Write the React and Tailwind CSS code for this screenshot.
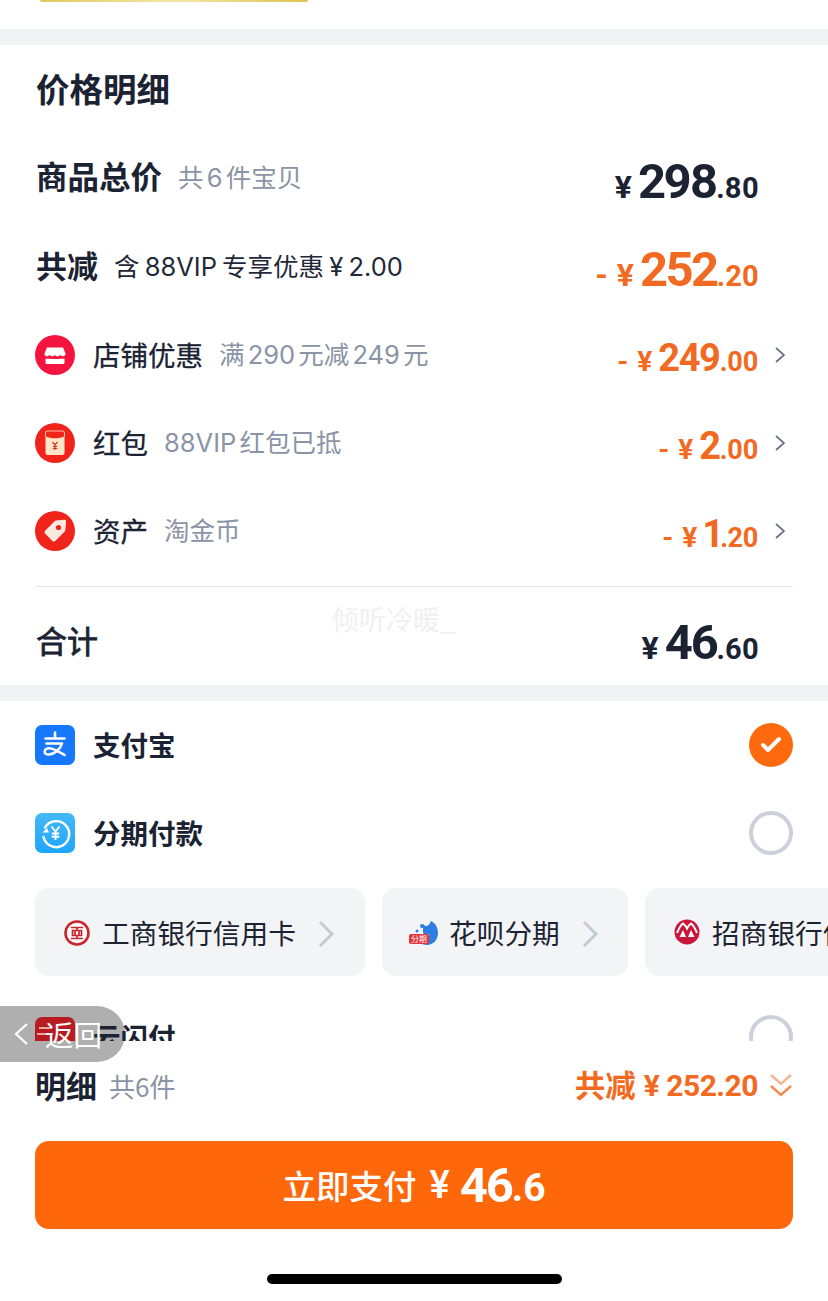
import React from 'react';
import { Check } from 'lucide-react';

const numFont = "font-['Roboto','Noto_Sans_CJK_SC',sans-serif]";
const noteClass = "font-['Inter','Noto_Sans_CJK_SC',sans-serif] text-[25.500px]";

const Price = ({ minus, whole, cents, bigClass, smallClass, yenClass }) => (
  <span className={`flex items-baseline ${numFont} font-bold leading-none proportional-nums`}>
    {minus && <span className={`${yenClass} mr-[9px]`}>-</span>}
    <span className={`${yenClass} mr-[6px]`}>¥</span>
    <span className={bigClass}>{whole}</span>
    <span className={smallClass}>{cents}</span>
  </span>
);

const StoreIcon = () => (
  <svg viewBox="0 0 40 40" className="w-[40px] h-[40px] shrink-0">
    <circle cx="20" cy="20" r="20" fill="#f5143f" />
    <path d="M12 12.500h16l2.500 6c.3 1.600-1 2.800-2.600 2.800-1.200 0-2.200-.6-2.700-1.500-.6 1-1.600 1.500-2.700 1.500s-2-.5-2.500-1.500c-.5 1-1.400 1.500-2.500 1.500s-2.100-.5-2.700-1.500c-.5.900-1.500 1.500-2.700 1.500-1.600 0-2.900-1.200-2.600-2.800z" fill="#fff" />
    <path d="M10.500 23.500c3 .6 16 .6 19 0v4.200c0 .8-.6 1.300-1.300 1.300H11.800c-.7 0-1.300-.5-1.300-1.300z" fill="#fff" />
  </svg>
);

const EnvelopeIcon = () => (
  <svg viewBox="0 0 40 40" className="w-[40px] h-[40px] shrink-0">
    <circle cx="20" cy="20" r="20" fill="#f0241b" />
    <rect x="10.500" y="8" width="19" height="24" rx="2" fill="#fde6c8" />
    <path d="M10.500 10a2 2 0 0 1 2-2h15a2 2 0 0 1 2 2v3.500c-5 3-14 3-19 0z" fill="#f0241b" stroke="#fde6c8" strokeWidth="0.8" />
    <path d="M17.500 19l2.500 3 2.500-3M20 22v5M17.800 23.500h4.400M17.800 25.500h4.400" stroke="#d8301f" strokeWidth="1.200" fill="none" />
  </svg>
);

const TagIcon = () => (
  <svg viewBox="0 0 40 40" className="w-[40px] h-[40px] shrink-0">
    <circle cx="20" cy="20" r="20" fill="#f0241b" />
    <path d="M21 9.500l8.200-.7c1.100-.1 2 .8 1.900 1.900l-.7 8.200c-.1.600-.3 1.100-.7 1.500l-9.500 9.500c-.8.800-2 .8-2.800 0l-7.300-7.300c-.8-.8-.8-2 0-2.800l9.500-9.500c.4-.4.900-.7 1.400-.8z" fill="#fde9e0" />
    <circle cx="23.500" cy="16.500" r="2.600" fill="#f0241b" />
  </svg>
);

const AlipayIcon = () => (
  <svg viewBox="0 0 40 40" className="w-[40px] h-[40px] shrink-0">
    <rect width="40" height="40" rx="7" fill="#1677ff" />
    <path d="M10.500 13.500h19M20 7.500v6M11.500 18.500h15.500c-1.500 5.500-7.500 10.800-13 11-3 .1-4.500-1.300-4.300-3.200.2-2 2.300-3.500 5.300-3 4.500.6 10 4 14.500 6.700" stroke="#fff" strokeWidth="2.600" fill="none" strokeLinecap="round" strokeLinejoin="round" />
  </svg>
);

const InstallmentIcon = () => (
  <svg viewBox="0 0 40 40" className="w-[40px] h-[40px] shrink-0">
    <defs>
      <linearGradient id="inst" x1="0" y1="0" x2="0" y2="1">
        <stop offset="0" stopColor="#45b9f5" />
        <stop offset="1" stopColor="#1ea5fb" />
      </linearGradient>
    </defs>
    <rect width="40" height="40" rx="7" fill="url(#inst)" />
    <path d="M10 14.500A13 13 0 1 1 8.500 24" stroke="#fff" strokeWidth="2.400" fill="none" strokeLinecap="round" />
    <path d="M7.500 19.500h6.500l-2-4.500z" fill="#fff" />
    <path d="M16.500 13.500l4 5 4-5M20.500 18.500v8.500M16.800 20.500h7.400M16.800 23.800h7.400" stroke="#fff" strokeWidth="1.900" fill="none" />
  </svg>
);

const IcbcIcon = () => (
  <svg viewBox="0 0 26 26" className="w-[26px] h-[26px] shrink-0 translate-y-[1px]">
    <circle cx="13" cy="13" r="11.500" stroke="#c8252c" strokeWidth="2.600" fill="#fff" />
    <path d="M7 7.500h12M7 18.500h12M13 7.500v3M13 15.500v3M8.500 10.500h9v5h-9zM11 10.500v5M15 10.500v5" stroke="#c8252c" strokeWidth="1.700" fill="none" />
  </svg>
);

const HuabeiIcon = () => (
  <span className="relative w-[30px] h-[26px] shrink-0 -mr-[2px] translate-y-[1px]">
    <svg viewBox="0 0 30 26" className="w-[30px] h-[26px]">
      <path d="M14 4c2 3 6 3 8-3 4 2 7 6 7 12 0 7-5 12-11 12-3 0-6-1-8-3 6 0 11-3 10-8-2 2-6 1-6-2z" fill="#2d7fe3" />
      <circle cx="13" cy="6" r="2" fill="#2d7fe3" />
      <circle cx="8" cy="11" r="1.500" fill="#2d7fe3" />
    </svg>
    <span className="absolute left-0 bottom-[2px] w-[20px] h-[10px] bg-[#e2353c] rounded-[2px] text-white text-[8px] leading-[10px] text-center">分期</span>
  </span>
);

const CmbIcon = () => (
  <svg viewBox="0 0 26 26" className="w-[26px] h-[26px] shrink-0">
    <circle cx="13" cy="13" r="12.500" fill="#c8173a" />
    <path d="M3 14C5 9 7 6 9 4.500c1.500 1 3 3 4 5 1-2 2.500-4 4-5 2 1.500 4 4.500 6 9.500" stroke="#fff" strokeWidth="2" fill="none" />
    <path d="M5.500 18l3.500-7 3 7zM14 18l3-7 3.500 7z" fill="#fff" />
  </svg>
);

const UnionIcon = () => (
  <svg viewBox="0 0 40 40" className="w-[40px] h-[40px] shrink-0">
    <rect width="40" height="40" rx="7" fill="#b81c22" />
    <path d="M4 11h13M2 17h16" stroke="#f3d9c8" strokeWidth="1.600" />
  </svg>
);

const DetailRow = ({ icon, title, note, price }) => (
  <div className="h-[88px] flex items-center">
    {icon}
    <span className="ml-[18px] text-[27.500px] text-[#1b2333] [-webkit-text-stroke:0.3px_#1b2333]">{title}</span>
    <span className={`ml-[16px] ${noteClass} [word-spacing:-4px] text-[#8a94a6]`}>{note}</span>
    <span className="ml-auto translate-y-[3px]">{price}</span>
    <span className="w-[35px] pl-[17px]">
      <svg viewBox="0 0 10 16" className="w-[10px] h-[16px]" fill="none" stroke="#6b7280" strokeWidth="1.800">
        <path d="M1 1l8 7-8 7" />
      </svg>
    </span>
  </div>
);

const smallPrice = (whole, cents) => (
  <Price
    minus
    whole={whole}
    cents={cents}
    yenClass="text-[28px] text-[#f26a21]"
    bigClass="text-[38px] tracking-[-1.500px] text-[#f26a21]"
    smallClass="text-[27px] tracking-[-0.5px] text-[#f26a21]"
  />
);

const PayRow = ({ icon, title, checked }) => (
  <div className="h-[88px] flex items-center shrink-0">
    {icon}
    <span className="ml-[18px] text-[27.500px] font-bold text-[#1b2333]">{title}</span>
    {checked ? (
      <span className="ml-auto w-[44px] h-[44px] rounded-full bg-[#ff6a0e] flex items-center justify-center">
        <Check size={24} strokeWidth={4} className="text-white" />
      </span>
    ) : (
      <span className="ml-auto w-[44px] h-[44px] rounded-full border-[4px] border-[#cbd0da]" />
    )}
  </div>
);

const Chip = ({ icon, label, arrow, className }) => (
  <div className={`h-[88px] shrink-0 rounded-[14px] bg-[#f3f4f6] flex items-center ${className}`}>
    {icon}
    <span className="ml-[12px] text-[27.700px] text-[#1b2333] whitespace-nowrap translate-y-[1px]">{label}</span>
    {arrow && (
      <svg viewBox="0 0 16 28" className="ml-[22px] w-[16px] h-[28px] shrink-0 translate-y-[2px]" fill="none" stroke="#c5cad4" strokeWidth="3">
        <path d="M2 2l12 12L2 26" />
      </svg>
    )}
  </div>
);

export default function App() {
  return (
    <div className="relative w-[828px] h-[1301px] overflow-hidden bg-white flex flex-col font-['Noto_Sans_CJK_SC','Noto_Sans',sans-serif]">
      <div className="h-[29px] shrink-0">
        <div className="ml-[40px] w-[268px] h-[2px] rounded-b bg-gradient-to-r from-[#e2c85a] via-[#f3e6a8] to-[#dfc24e]" />
      </div>
      <div className="h-[16px] shrink-0 bg-[#f2f3f5]" />

      {/* price breakdown */}
      <section className="relative h-[640px] shrink-0 px-[35px]">
        <h2 className="h-[89px] flex items-center pl-[1px] text-[33.500px] font-bold text-[#1b2333] -translate-y-[1px]">价格明细</h2>

        <div className="h-[88px] flex items-center pl-[1px]">
          <span className="text-[31.500px] font-bold text-[#1b2333] -translate-y-[2px]">商品总价</span>
          <span className={`ml-[16px] ${noteClass} [word-spacing:-4px] text-[#8a94a6]`}>共 6 件宝贝</span>
          <span className="ml-auto mr-[34px] translate-y-[3px]">
            <Price
              whole="298"
              cents=".80"
              yenClass="text-[32px] text-[#1b2333]"
              bigClass="text-[49px] tracking-[-2.500px] text-[#1b2333]"
              smallClass="text-[29px] text-[#1b2333]"
            />
          </span>
        </div>

        <div className="h-[89px] flex items-center pl-[1px]">
          <span className="text-[31px] font-bold text-[#1b2333] -translate-y-[1px]">共减</span>
          <span className={`ml-[16px] ${noteClass} [word-spacing:-2px] text-[#1f2937] translate-y-[1px]`}>含 88VIP 专享优惠 ¥ 2.00</span>
          <span className="ml-auto mr-[34px] translate-y-[3px]">
            <Price
              minus
              whole="252"
              cents=".20"
              yenClass="text-[32px] text-[#f26a21]"
              bigClass="text-[49px] tracking-[-2.500px] text-[#f26a21]"
              smallClass="text-[29px] text-[#f26a21]"
            />
          </span>
        </div>

        <DetailRow icon={<StoreIcon />} title="店铺优惠" note="满 290 元减 249 元" price={smallPrice('249', '.00')} />
        <DetailRow icon={<EnvelopeIcon />} title="红包" note="88VIP 红包已抵" price={smallPrice('2', '.00')} />
        <DetailRow icon={<TagIcon />} title="资产" note="淘金币" price={smallPrice('1', '.20')} />

        <div className="mt-[11px] h-px bg-[#e5e7eb]" />

        <div className="h-[97px] flex items-center pl-[1px]">
          <span className="text-[31px] text-[#1b2333] translate-y-[5px] [-webkit-text-stroke:0.8px_#1b2333]">合计</span>
          <span className="ml-auto mr-[34px] translate-y-[7px]">
            <Price
              whole="46"
              cents=".60"
              yenClass="text-[32px] text-[#1b2333]"
              bigClass="text-[49px] tracking-[-2.500px] text-[#1b2333]"
              smallClass="text-[29px] text-[#1b2333]"
            />
          </span>
        </div>

        {/* watermark */}
        <span className="absolute left-[332px] top-[560px] text-[27px] text-[#f0f0f2] leading-none whitespace-nowrap">倾听冷暖_</span>
      </section>

      <div className="h-[16px] shrink-0 bg-[#f2f3f5]" />

      {/* payment methods, clipped by the bottom bar */}
      <section className="relative z-20 h-[340px] shrink-0 overflow-hidden pl-[35px]">
        <div className="pr-[35px]">
          <PayRow icon={<AlipayIcon />} title="支付宝" checked />
          <PayRow icon={<InstallmentIcon />} title="分期付款" />
        </div>
        <div className="mt-[11px] flex gap-[17px]">
          <Chip className="w-[330px] pl-[29px]" icon={<IcbcIcon />} label="工商银行信用卡" arrow />
          <Chip className="w-[246px] pl-[27px]" icon={<HuabeiIcon />} label="花呗分期" arrow />
          <Chip className="w-[330px] pl-[29px]" icon={<CmbIcon />} label="招商银行信用卡" />
        </div>
        <div className="pr-[35px] mt-[17px]">
          <PayRow icon={<UnionIcon />} title="云闪付" />
        </div>
      </section>

      {/* bottom bar */}
      <div className="flex-1 px-[35px] flex flex-col">
        <div className="h-[88px] shrink-0 flex items-center">
          <span className="text-[31px] font-bold text-[#1b2333]">明细</span>
          <span className="ml-[12px] text-[26px] text-[#8a94a6]">共6件</span>
          <span className="ml-auto text-[30.500px] font-bold text-[#f26a21]">共减</span>
          <span className={`ml-[8px] text-[30px] tracking-[-0.500px] font-bold text-[#f26a21] ${numFont}`}>¥ 252.20</span>
          <svg viewBox="0 0 24 25" className="ml-[11px] w-[24px] h-[25px]" fill="none" strokeWidth="2.400">
            <path d="M2 2l10 9 10-9" stroke="#f7b48d" />
            <path d="M2 13l10 9 10-9" stroke="#f58a4b" />
          </svg>
        </div>
        <button className="h-[88px] mt-[12px] shrink-0 rounded-[14px] bg-[#ff670b] text-white flex items-center justify-center">
          <span className="text-[33.500px] font-medium">立即支付</span>
          <span className="ml-[13px] font-['Roboto',sans-serif] font-medium text-[38px] leading-none">¥</span>
          <span className="ml-[10px] font-['Roboto',sans-serif] font-bold text-[49px] tracking-[-2px] leading-none">46</span>
          <span className="font-['Roboto',sans-serif] font-bold text-[39px] leading-none translate-y-[3px]">.6</span>
        </button>
        <div className="mt-[45px] mx-auto w-[295px] h-[10px] rounded-full bg-black" />
      </div>

      {/* floating back button: the pill sits under the list, its label above */}
      <div className="absolute z-10 left-0 top-[1006px] w-[125px] h-[56px] rounded-r-[28px] bg-[#7a7a7a]/60" />
      <div className="absolute z-30 left-0 top-[1006px] h-[56px] flex items-center pl-[14px] text-white">
        <svg viewBox="0 0 14 22" className="w-[14px] h-[22px]" fill="none" stroke="currentColor" strokeWidth="2.200">
          <path d="M13 1L2 11l11 10" />
        </svg>
        <span className="ml-[17px] text-[28.500px] leading-none">返回</span>
      </div>
    </div>
  );
}
